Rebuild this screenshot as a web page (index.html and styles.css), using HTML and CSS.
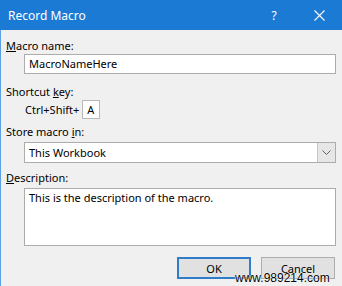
FILE: index.html
```html
<!DOCTYPE html>
<html lang="en">
<head>
  <meta charset="UTF-8" />
  <meta name="viewport" content="width=device-width, initial-scale=1.0" />
  <title>Record Macro</title>
  <link rel="stylesheet" href="styles.css">
</head>
<body>
  <div class="dialog">
    <div class="titlebar">
      <span class="title">Record Macro</span>
      <span class="help">?</span>
      <span class="close">
        <svg width="11" height="11" viewBox="0 0 11 11">
          <path d="M0.5 0.5 L10.5 10.5 M10.5 0.5 L0.5 10.5" stroke="#fff" stroke-width="1.1" fill="none" />
        </svg>
      </span>
    </div>

    <div class="content">
      <div class="label"><u>M</u>acro name:</div>
      <div class="box name">MacroNameHere</div>

      <div class="label gap">Shortcut <u>k</u>ey:</div>
      <div class="shortcut">
        <span>Ctrl+Shift+</span>
        <span class="box key">A</span>
      </div>

      <div class="label gap-sm">Store macro <u>i</u>n:</div>
      <div class="box select">
        <span class="value">This Workbook</span>
        <span class="arrow">
          <svg width="9" height="5" viewBox="0 0 9 5">
            <path d="M0.5 0.5 L4.5 4.5 L8.5 0.5" stroke="#606060" stroke-width="1" fill="none" />
          </svg>
        </span>
      </div>

      <div class="label gap-desc"><u>D</u>escription:</div>
      <div class="box desc">This is the description of the macro.</div>

      <div class="buttons">
        <button class="btn ok">OK</button>
        <button class="btn">Cancel</button>
      </div>
    </div>

    <span class="watermark">www.989214.com</span>
  </div>
</body>
</html>
```

FILE: styles.css
```css
body {
  margin: 0;
  font-family: "Noto Sans", "Open Sans", sans-serif;
  font-size: 11px;
  color: #000;
  background: #f0f0f0;
}
.dialog {
  position: relative;
  width: 342px;
  height: 286px;
  overflow: hidden;
  background: #f0f0f0;
}
.titlebar {
  display: flex;
  align-items: center;
  height: 30px;
  background: #1b7bd4;
  color: #fff;
  font-size: 12px;
}
.title {
  flex: 1;
  padding-left: 8px;
}
.help {
  width: 24px;
  text-align: center;
  margin-right: 10px;
}
.close {
  display: flex;
  align-items: center;
  justify-content: center;
  width: 46px;
  height: 30px;
}
.content {
  border-left: 1px solid #5d9fe0;
  padding: 8px 6px 0 5px;
  height: 248px;
}
.label {
  line-height: 16px;
}
.gap {
  margin-top: 10px;
}
.gap-sm {
  margin-top: 5px;
}
.gap-desc {
  margin-top: 7px;
}
.box {
  background: #fff;
  border: 1px solid #acacac;
  box-sizing: border-box;
}
.name {
  margin-left: 18px;
  height: 20px;
  line-height: 18px;
  padding-left: 4px;
}
.shortcut {
  display: flex;
  align-items: center;
  margin-left: 19px;
  height: 19px;
}
.key {
  display: inline-block;
  width: 18px;
  height: 19px;
  line-height: 17px;
  margin-left: 3px;
  padding-left: 4px;
  border-color: #b9b9b9;
}
.select {
  display: flex;
  align-items: stretch;
  margin: 2px 0 0 18px;
  height: 21px;
}
.value {
  flex: 1;
  line-height: 19px;
  padding-left: 4px;
}
.arrow {
  display: flex;
  align-items: center;
  justify-content: center;
  width: 17px;
  background: #e6e6e6;
  border-left: 1px solid #c4c4c4;
}
.desc {
  margin: 2px 0 0 18px;
  height: 58px;
  padding: 1px 4px;
  line-height: 15px;
}
.buttons {
  display: flex;
  justify-content: flex-end;
  gap: 10px;
  margin: 11px 1px 0 0;
}
.btn {
  width: 74px;
  height: 22px;
  background: #e1e1e1;
  border: 1px solid #adadad;
  font-family: inherit;
  font-size: 11px;
  color: #000;
  padding: 0;
}
.ok {
  border: 2px solid #2f7dc9;
}
.watermark {
  position: absolute;
  left: 235px;
  top: 271px;
  font-family: "Liberation Sans", Arial, sans-serif;
  font-size: 12px;
  line-height: 14px;
  color: #000;
  text-shadow: 0 0 1px #fff, 0 0 1px #fff, 0 0 1px #fff;
}
```
